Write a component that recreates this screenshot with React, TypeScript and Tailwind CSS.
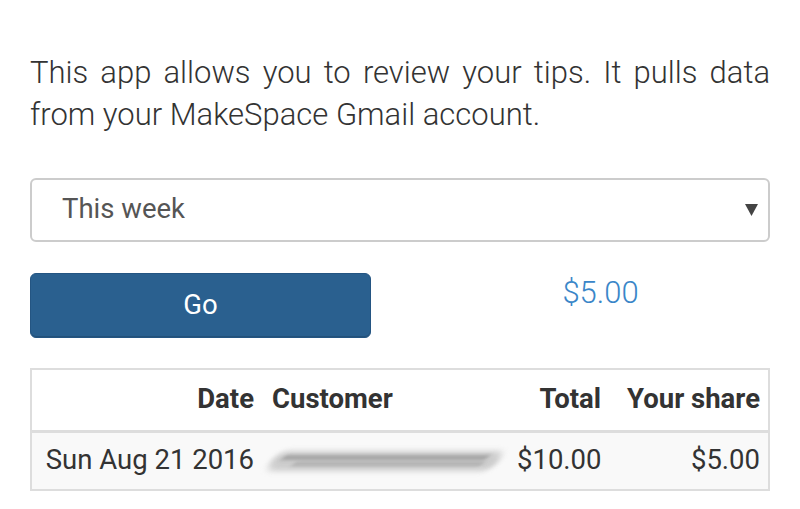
export default function App() {
  return (
    <div className="min-h-screen bg-white px-[30px] pt-[52px] font-['Roboto',sans-serif]">
      {/* Intro */}
      <p className="text-justify text-[31px] leading-[42px] font-light text-[#333]">
        This app allows you to review your tips. It pulls data from your MakeSpace Gmail account.
      </p>

      {/* Period select */}
      <div className="mt-[42px] flex h-[64px] items-center justify-between rounded-[6px] border-2 border-[#ccc] pb-[3px] pl-[30px] pr-[10px]">
        <span className="text-[27.5px] text-[#555]">This week</span>
        <svg width="13" height="12" viewBox="0 0 13 12" className="mt-[3px]">
          <path d="M0 0 L13 0 L6.5 12 Z" fill="#444" />
        </svg>
      </div>

      {/* Go + total */}
      <div className="mt-[31px] flex items-start">
        <button className="h-[65px] w-[341px] rounded-[6px] border border-[#245582] bg-[#2a608f] pb-[2px] text-[27.5px] text-white shadow-[inset_0_-1px_0_rgba(0,0,0,0.15)]">
          Go
        </button>
        <div className="flex flex-1 justify-center pl-[60px] text-[31px] leading-[40px] font-light text-[#3a86c8]">
          $5.00
        </div>
      </div>

      {/* Tips table */}
      <table className="mt-[30px] w-full table-fixed border-collapse border-2 border-[#ddd] text-[27.5px] text-[#333]">
        <colgroup>
          <col className="w-[233px]" />
          <col className="w-[245px]" />
          <col className="w-[102px]" />
          <col />
        </colgroup>
        <thead>
          <tr className="h-[62px] border-b-[3px] border-[#ddd]">
            <th className="px-[10px] pb-[3px] text-right font-bold">Date</th>
            <th className="pl-[8px] pr-[10px] pb-[3px] text-left font-bold">Customer</th>
            <th className="px-[10px] pb-[3px] text-right font-bold">Total</th>
            <th className="pl-[10px] pr-[8px] pb-[3px] text-right font-bold">Your share</th>
          </tr>
        </thead>
        <tbody>
          <tr className="h-[59px] bg-[#f9f9f9]">
            <td className="px-[10px] pb-[2px] text-right">Sun Aug 21 2016</td>
            <td className="pl-[5px] pr-[8px]">
              <div className="relative h-[30px]">
                <div className="absolute left-[2px] top-[5px] h-[20px] w-[228px] -skew-x-[35deg] rounded-full bg-[#bbb] opacity-70 blur-[3px]" />
                <div className="absolute left-[14px] top-[9px] h-[5px] w-[205px] -skew-x-[45deg] rounded-full bg-[#888] opacity-60 blur-[2px]" />
                <div className="absolute left-[24px] top-[16px] h-[4px] w-[190px] -skew-x-[45deg] rounded-full bg-[#999] opacity-60 blur-[2px]" />
              </div>
            </td>
            <td className="pl-[8px] pr-[10px] pb-[2px] text-left">$10.00</td>
            <td className="pl-[10px] pr-[8px] pb-[2px] text-right">$5.00</td>
          </tr>
        </tbody>
      </table>
    </div>
  );
}
